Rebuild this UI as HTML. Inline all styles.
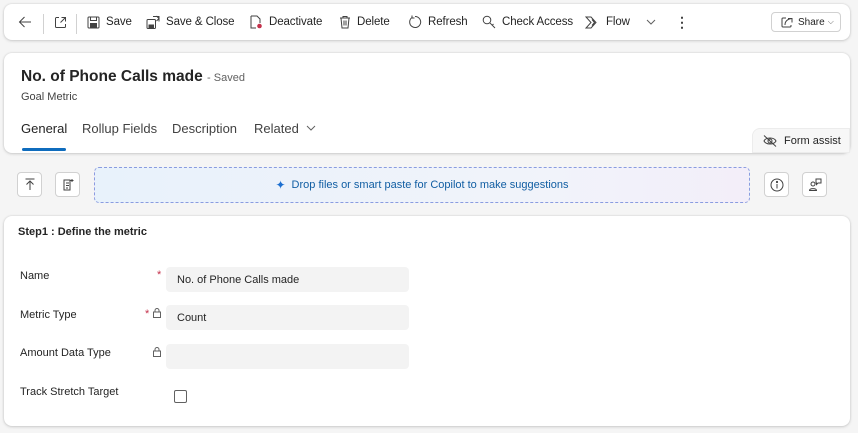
<!DOCTYPE html>
<html><head><meta charset="utf-8"><style>
*{box-sizing:border-box;margin:0;padding:0}
body{width:858px;height:433px;background:#f5f5f5;font-family:"Liberation Sans",sans-serif;color:#242424;position:relative;overflow:hidden}
.card{position:absolute;background:#fff;border-radius:8px;box-shadow:0 0 2px rgba(0,0,0,.12),0 1px 3px rgba(0,0,0,.14)}
.tb{left:4px;top:4px;width:846px;height:36px}
.it{position:absolute;top:0;height:36px;display:flex;align-items:center;font-size:11.5px;color:#242424;letter-spacing:-0.1px}
.it svg{margin-right:6px}
.sep{position:absolute;top:10px;width:1px;height:20px;background:#d1d1d1}
.hd{left:4px;top:53px;width:846px;height:100px}
.fm{left:4px;top:216px;width:846px;height:210px}
.lbl{position:absolute;left:16px;font-size:11px;color:#242424}
.inp{position:absolute;left:162px;width:243px;height:25px;background:#f3f3f3;border-radius:4px;font-size:11px;padding:7px 0 0 11px}
.req{position:absolute;color:#c4314b;font-size:11px}
.sb{position:absolute;top:172px;width:25px;height:25px;border:1px solid #d1d1d1;border-radius:4px;background:#fff;display:flex;align-items:center;justify-content:center}
</style></head><body>
<div class="card tb">
 <div class="it" style="left:14px"><svg width="14" height="14" viewBox="0 0 14 14" fill="none" stroke="#424242" stroke-width="1"><path d="M13 7H1.5M6.5 2L1.5 7l5 5"/></svg></div>
 <div class="sep" style="left:39px"></div>
 <div class="it" style="left:50px"><svg width="13" height="13" viewBox="0 0 13 13" fill="none" stroke="#424242" stroke-width="1"><path d="M5 1.5H2.5a1 1 0 0 0-1 1v8a1 1 0 0 0 1 1h8a1 1 0 0 0 1-1V8M7.5 1.5h4v4M11.5 1.5l-5 5"/></svg></div>
 <div class="sep" style="left:72px"></div>
 <div class="it" style="left:83px"><svg width="13" height="13" viewBox="0 0 13 13" fill="none" stroke="#424242"><rect x="1" y="1" width="11" height="11" rx="1"/><rect x="3.5" y="1" width="6" height="3.5"/><rect x="3.5" y="7.5" width="6" height="4.5" fill="#424242"/></svg>Save</div>
 <div class="it" style="left:142px"><svg width="14" height="14" viewBox="0 0 14 14" fill="none" stroke="#424242"><rect x="1" y="4.5" width="8.5" height="9" rx="1"/><rect x="3" y="10" width="4.5" height="3.5" fill="#424242"/><path d="M7 1.5h6v5M10.5 1l2.5 2.5-2.5 2.5"/></svg>Save &amp; Close</div>
 <div class="it" style="left:245px"><svg width="14" height="14" viewBox="0 0 14 14" fill="none" stroke="#424242"><path d="M2 1h6l3 3v4M2 1v12h5"/><circle cx="10.5" cy="11" r="2.3" fill="#c4314b" stroke="none"/></svg>Deactivate</div>
 <div class="it" style="left:335px"><svg width="12" height="14" viewBox="0 0 12 14" fill="none" stroke="#424242"><path d="M1 3h10M4 3V1.5h4V3M2 3l1 10h6l1-10M5 5.5v5M7 5.5v5"/></svg>Delete</div>
 <div class="it" style="left:404px"><svg width="14" height="14" viewBox="0 0 14 14" fill="none" stroke="#424242"><path d="M4 2.5A5.5 5.5 0 1 0 7 1.5M4 0.5v2.5h2.5"/></svg>Refresh</div>
 <div class="it" style="left:478px"><svg width="14" height="14" viewBox="0 0 14 14" fill="none" stroke="#424242"><circle cx="5" cy="5" r="3.8"/><path d="M7.7 7.7L13 13M10 10.5l1.5-1.5"/></svg>Check Access</div>
 <div class="it" style="left:581px"><svg width="15" height="13" viewBox="0 0 15 13" fill="none" stroke="#424242"><path d="M1 1h5l5 5.5-5 5.5H1l5-5.5z M7 3.5l2.5 3-2.5 3"/></svg>Flow<svg style="margin-left:16px" width="10" height="6" viewBox="0 0 10 6" fill="none" stroke="#616161"><path d="M1 1l4 4 4-4"/></svg></div>
 <div class="it" style="left:671px;font-size:14px;font-weight:bold;color:#424242">⋮</div>
 <div style="position:absolute;left:767px;top:8px;width:70px;height:20px;border:1px solid #d1d1d1;border-radius:4px;font-size:10px;display:flex;align-items:center;padding-left:9px"><svg width="12" height="11" viewBox="0 0 12 11" fill="none" stroke="#424242" style="margin-right:5px"><path d="M5 1H2a1 1 0 0 0-1 1v7a1 1 0 0 0 1 1h7a1 1 0 0 0 1-1V8M7 1.5h4v4M11 1.5C7 2 4 4 4 8"/></svg>Share <span style="font-size:8px;margin-left:3px;color:#616161">⌵</span></div>
</div>

<div class="card hd">
 <div style="position:absolute;left:17px;top:15px;font-size:15.5px;font-weight:bold">No. of Phone Calls made <span style="font-size:11px;font-weight:normal;color:#616161">- Saved</span></div>
 <div style="position:absolute;left:17px;top:38px;font-size:11px;color:#424242">Goal Metric</div>
 <div style="position:absolute;left:17px;top:68px;font-size:13px;color:#242424">General</div>
 <div style="position:absolute;left:18px;top:95px;width:44px;height:3px;background:#0f6cbd;border-radius:2px"></div>
 <div style="position:absolute;left:78px;top:68px;font-size:13px;color:#424242">Rollup Fields</div>
 <div style="position:absolute;left:168px;top:68px;font-size:13px;color:#424242">Description</div>
 <div style="position:absolute;left:250px;top:68px;font-size:13px;color:#424242">Related <svg style="margin-left:4px;vertical-align:2px" width="10" height="6" viewBox="0 0 10 6" fill="none" stroke="#616161"><path d="M1 1l4 4 4-4"/></svg></div>
 <div style="position:absolute;left:748px;top:75px;width:98px;height:25px;background:#f7f7f7;border-top-left-radius:8px;border:1px solid #ececec;font-size:11px;display:flex;align-items:center;padding-left:10px"><svg width="14" height="12" viewBox="0 0 14 12" fill="none" stroke="#424242" style="margin-right:7px"><path d="M1 6c2-4 10-4 12 0-2 4-10 4-12 0z"/><circle cx="7" cy="6" r="2"/><path d="M1 0.5l12 11"/></svg>Form assist</div>
</div>

<div class="sb" style="left:17px"><svg width="10" height="13" viewBox="0 0 10 13" fill="none" stroke="#424242"><path d="M0.5 1h9M5 12V3.5M1.5 6.5L5 3l3.5 3.5"/></svg></div>
<div class="sb" style="left:55px"><svg width="12" height="14" viewBox="0 0 12 14" fill="none" stroke="#424242"><path d="M2 2h6v10H2zM4 5h3M4 7.5h3M4 10h2"/><path d="M10 1v3M8.5 2.5h3" stroke-width="1"/></svg></div>
<div style="position:absolute;left:94px;top:167px;width:656px;height:36px;border:1px dashed #8a9ce0;border-radius:5px;background:linear-gradient(90deg,#e8f2fb,#f1f3fa 70%,#f3eef9);display:flex;align-items:center;justify-content:center;font-size:11px;color:#115ea3"><span style="color:#1d6fd0;margin-right:6px;font-size:12px">✦</span>Drop files or smart paste for Copilot to make suggestions</div>
<div class="sb" style="left:764px"><svg width="14" height="14" viewBox="0 0 14 14" fill="none" stroke="#424242"><circle cx="7" cy="7" r="6"/><path d="M7 6v4.5"/><circle cx="7" cy="4" r=".6" fill="#424242"/></svg></div>
<div class="sb" style="left:802px"><svg width="14" height="14" viewBox="0 0 14 14" fill="none" stroke="#424242"><circle cx="5" cy="6" r="2"/><path d="M1.5 12.5c0-2.5 7-2.5 7 0zM8 1h5v4H10l-1.5 1.5V5H8z"/></svg></div>

<div class="card fm">
 <div style="position:absolute;left:14px;top:10px;font-size:11px;font-weight:bold">Step1 : Define the metric</div>
 <div class="lbl" style="top:54px">Name</div>
 <div class="req" style="left:153px;top:53px">*</div>
 <div class="inp" style="top:51px">No. of Phone Calls made</div>
 <div class="lbl" style="top:93px">Metric Type</div>
 <div class="req" style="left:141px;top:92px">*</div>
 <svg style="position:absolute;left:149px;top:92px" width="8" height="10" viewBox="0 0 8 10" fill="none" stroke="#616161"><rect x="0.5" y="4" width="7" height="5.5"/><path d="M2 4V2.5a2 2 0 0 1 4 0V4"/></svg>
 <div class="inp" style="top:89px">Count</div>
 <div class="lbl" style="top:131px">Amount Data Type</div>
 <svg style="position:absolute;left:149px;top:131px" width="8" height="10" viewBox="0 0 8 10" fill="none" stroke="#616161"><rect x="0.5" y="4" width="7" height="5.5"/><path d="M2 4V2.5a2 2 0 0 1 4 0V4"/></svg>
 <div class="inp" style="top:128px"></div>
 <div class="lbl" style="top:170px">Track Stretch Target</div>
 <div style="position:absolute;left:170px;top:174px;width:13px;height:13px;border:1px solid #616161;border-radius:2px"></div>
</div>
</body></html>
